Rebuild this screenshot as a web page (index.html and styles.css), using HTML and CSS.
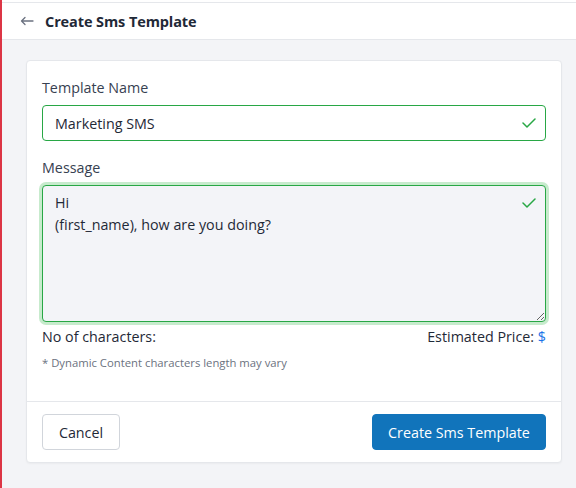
FILE: index.html
```html
<!DOCTYPE html>
<html lang="en">
<head>
<meta charset="utf-8">
<title>Create Sms Template</title>
<link rel="stylesheet" href="styles.css">
</head>
<body>
<div class="page">
  <header class="header">
    <div class="header-inner">
      <svg class="back" width="14" height="10" viewBox="0 0 14 10" fill="none" stroke="#6b7280" stroke-width="1.3" stroke-linecap="round" stroke-linejoin="round"><path d="M13 5H1.5M5 1.5L1.5 5L5 8.5"/></svg>
      <h1 class="title">Create Sms Template</h1>
    </div>
  </header>
  <main class="main">
    <section class="card">
      <div class="card-body">
        <label class="label">Template Name</label>
        <div class="field">
          <input class="input" type="text" value="Marketing SMS">
          <svg class="check" width="14" height="10" viewBox="0 0 14 10" fill="none" stroke="#28a745" stroke-width="1.5" stroke-linecap="round" stroke-linejoin="round"><path d="M1 5l4 4 8-8"/></svg>
        </div>
        <label class="label label-gap">Message</label>
        <div class="field">
          <textarea class="textarea">Hi
(first_name), how are you doing?</textarea>
          <svg class="check check-top" width="14" height="10" viewBox="0 0 14 10" fill="none" stroke="#28a745" stroke-width="1.5" stroke-linecap="round" stroke-linejoin="round"><path d="M1 5l4 4 8-8"/></svg>
        </div>
        <div class="meta">
          <span>No of characters:</span>
          <span>Estimated Price: <span class="price">$</span></span>
        </div>
        <p class="hint">* Dynamic Content characters length may vary</p>
      </div>
      <div class="card-footer">
        <button class="btn btn-cancel" type="button">Cancel</button>
        <button class="btn btn-primary" type="button">Create Sms Template</button>
      </div>
    </section>
  </main>
</div>
</body>
</html>
```
FILE: styles.css
```css
* { box-sizing: border-box; }
html, body { margin: 0; padding: 0; }
body {
  font-family: "Open Sans", "Noto Sans", Arial, sans-serif;
  color: #374151;
  background: #f3f4f7;
}
.page {
  min-height: 488px;
  border-left: 2px solid #dc3545;
  background: #f3f4f7;
}
.header {
  background: #fff;
  padding-top: 2px;
}
.header-inner {
  height: 38px;
  border-top: 1px solid #e5e7eb;
  border-bottom: 1px solid #e5e7eb;
  display: flex;
  align-items: center;
  padding-left: 18px;
}
.back { margin-right: 11px; }
.title {
  margin: 0;
  font-size: 14.5px;
  font-weight: 700;
  color: #1f2937;
  letter-spacing: -0.1px;
}
.main {
  padding: 20px 14px 24px 24px;
}
.card {
  background: #fff;
  border: 1px solid #e5e7eb;
  border-radius: 4px;
  box-shadow: 0 1px 2px rgba(0,0,0,0.04);
}
.card-body {
  padding: 16px 15px 30px 15px;
}
.label {
  display: block;
  font-size: 14.3px;
  line-height: 22px;
  color: #374151;
  margin-bottom: 6px;
}
.label-gap { margin-top: 16px; }
.field { position: relative; }
.input {
  display: block;
  width: 100%;
  height: 36px;
  border: 1px solid #28a745;
  border-radius: 4px;
  padding: 0 40px 0 12px;
  font-family: inherit;
  font-size: 14.3px;
  color: #1f2937;
  background: #fff;
  outline: none;
}
.check {
  position: absolute;
  right: 10px;
  top: 13px;
}
.check-top { top: 13px; }
.textarea {
  display: block;
  width: 100%;
  height: 137px;
  border: 1px solid #28a745;
  border-radius: 4px;
  padding: 6px 40px 6px 12px;
  font-family: inherit;
  font-size: 14.3px;
  line-height: 22px;
  color: #1f2937;
  background: #f3f4f8;
  box-shadow: 0 0 0 3px #c7ebcd;
  outline: none;
  resize: vertical;
}
.meta {
  display: flex;
  justify-content: space-between;
  margin-top: 4px;
  font-size: 14.3px;
  line-height: 22px;
  color: #1f2937;
}
.price { color: #1a73e8; }
.hint {
  margin: 7px 0 0;
  font-size: 11.3px;
  line-height: 16px;
  color: #6b7280;
}
.card-footer {
  border-top: 1px solid #e5e7eb;
  padding: 12px 15px 12px 15px;
  display: flex;
  justify-content: space-between;
}
.btn {
  height: 36px;
  border-radius: 4px;
  font-family: inherit;
  font-size: 14.3px;
  padding: 0;
  white-space: nowrap;
  cursor: pointer;
}
.btn-cancel {
  width: 78px;
  background: #fff;
  border: 1px solid #d1d5db;
  color: #1f2937;
}
.btn-primary {
  width: 174px;
  background: #1174bb;
  border: 1px solid #1174bb;
  color: #fff;
}
```
